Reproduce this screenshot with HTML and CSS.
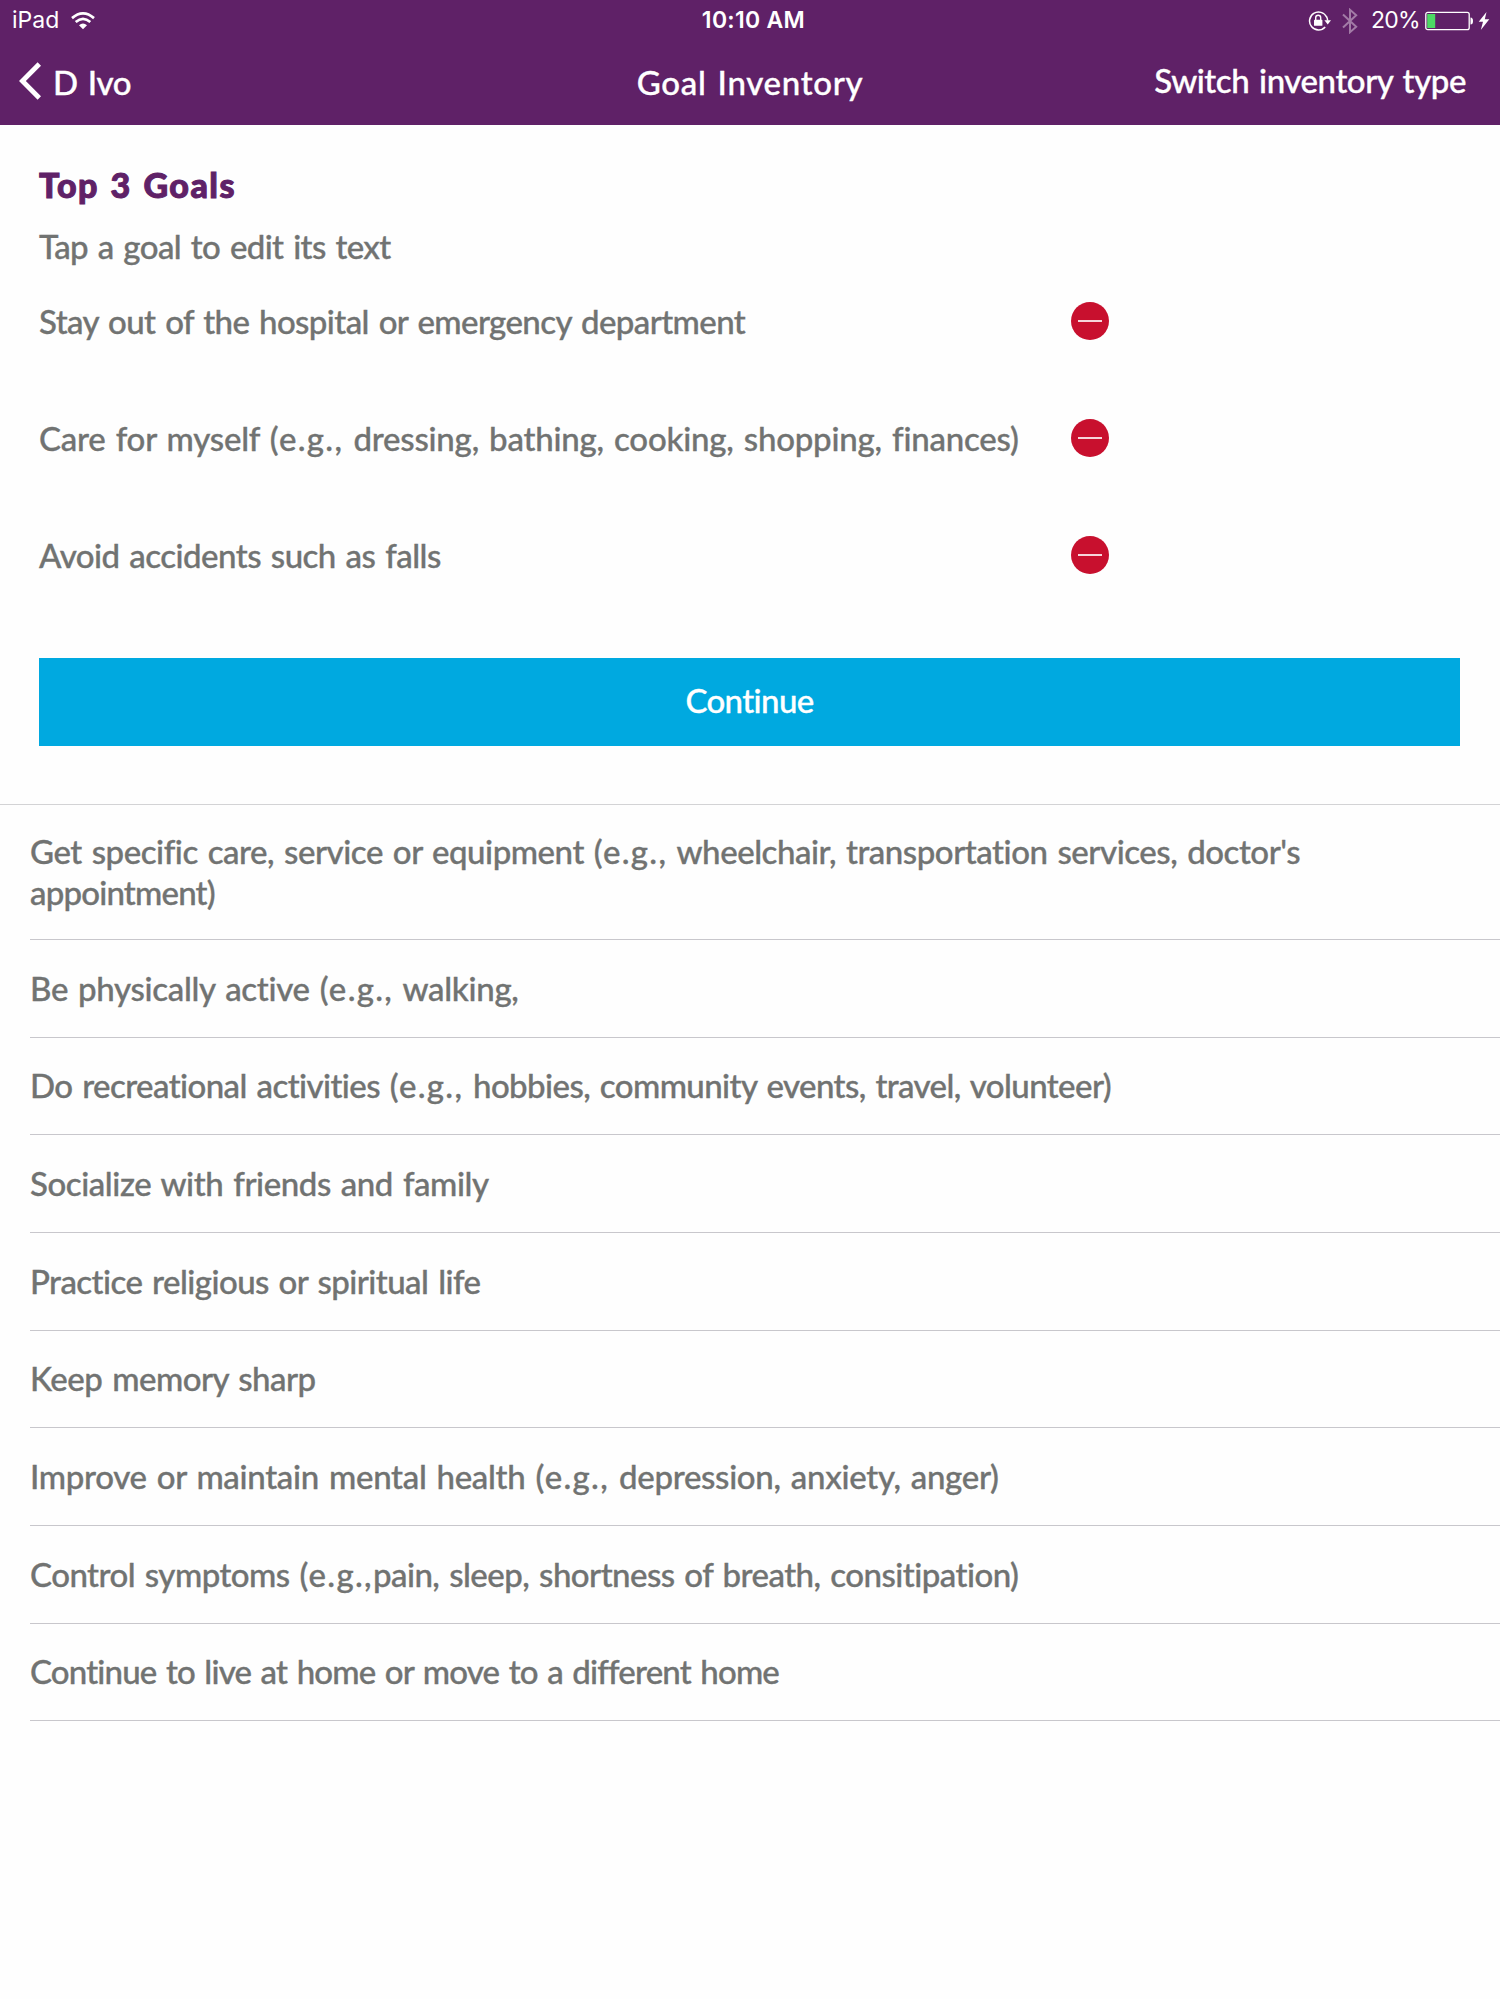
FILE: index.html
```html
<!DOCTYPE html>
<html lang="en">
<head>
<meta charset="utf-8">
<title>Goal Inventory</title>
<link rel="stylesheet" href="styles.css">
</head>
<body>
<header class="header">
  <div class="status">
    <div class="status-left">
      <span class="device">iPad</span>
      <svg class="wifi" width="24" height="18" viewBox="0 0 24 18" fill="none" stroke="#fff"><path d="M1 6.1Q12-3.3 23 6.1" stroke-width="2.7"/><path d="M4.7 10Q12 3.7 19.3 10" stroke-width="2.6"/><path d="M12 17.3L8 13.2Q12 9.7 16 13.2Z" fill="#fff" stroke="none"/></svg>
    </div>
    <span class="clock">10:10 AM</span>
    <div class="status-right">
      <svg class="lock" width="23" height="20" viewBox="0 0 23 20" fill="none" stroke="#fff"><path d="M18.7 6.2A9 9 0 1 0 17.2 16.1" stroke-width="1.5"/><path d="M16.4 9.2h6.6l-3.3 4.2z" fill="#fff" stroke="none"/><path d="M18.5 5.6q1 1.6 1.1 4" stroke-width="1.5"/><rect x="6" y="8.8" width="8.4" height="6" rx=".6" fill="#fff" stroke="none"/><path d="M7.7 9V6.8a2.5 2.5 0 0 1 5 0V9" stroke-width="1.4"/></svg>
      <svg class="bluetooth" width="16" height="26" viewBox="0 0 16 26" fill="none" stroke="#a27ba6" stroke-width="2"><path d="M1 6.5L14.2 18.8 8 24.2V1.8L14.2 7.2 1 19.5"/></svg>
      <span class="percent">20%</span>
      <svg class="battery" width="49" height="20" viewBox="0 0 49 20"><rect x=".8" y="1.3" width="43.4" height="17.4" rx="2" fill="none" stroke="#fff" stroke-width="1.3"/><rect x="2.2" y="3" width="8" height="14" fill="#4cd964"/><path d="M45.5 6.5q2.5 0 2.5 3.5t-2.5 3.5z" fill="#fff"/></svg>
      <svg class="bolt" width="12" height="18" viewBox="0 0 12 18" fill="#fff"><path d="M8.5 0L.7 9.7H5L2.8 18 11.3 7.3H6.8z"/></svg>
    </div>
  </div>
  <nav class="nav">
    <a class="back"><svg width="22" height="38" viewBox="0 0 22 38" fill="none" stroke="#fff" stroke-width="4.8"><path d="M20.3 2L3.4 19 20.3 36"/></svg><span class="t-back">D Ivo</span></a>
    <h1 class="title"><span class="t-title">Goal Inventory</span></h1>
    <a class="switch"><span class="t-switch">Switch inventory type</span></a>
  </nav>
</header>
<main>
  <section class="top">
    <h2 class="heading"><span class="t-heading">Top 3 Goals</span></h2>
    <p class="hint"><span class="t-hint">Tap a goal to edit its text</span></p>
    <ul class="goals">
      <li class="goal"><span class="t-stay">Stay out of the hospital or emergency department</span><i class="remove"></i></li>
      <li class="goal"><span class="t-care">Care for myself <span class="eg">(e.g.,</span> dressing, bathing, cooking, shopping, finances)</span><i class="remove"></i></li>
      <li class="goal"><span class="t-avoid">Avoid accidents such as falls</span><i class="remove"></i></li>
    </ul>
    <button class="continue"><span class="t-continue">Continue</span></button>
  </section>
  <ul class="list">
    <li class="row row-tall"><span class="t-get">Get specific care, service or equipment <span class="eg">(e.g.,</span> wheelchair, transportation services, doctor's<br><span class="t-appt">appointment)</span></span></li>
    <li class="row"><span class="t-be">Be physically active <span class="eg">(e.g.,</span> walking,</span></li>
    <li class="row"><span class="t-do">Do recreational activities <span class="eg">(e.g.,</span> hobbies, community events, travel, volunteer)</span></li>
    <li class="row"><span class="t-social">Socialize with friends and family</span></li>
    <li class="row"><span class="t-practice">Practice religious or spiritual life</span></li>
    <li class="row"><span class="t-keep">Keep memory sharp</span></li>
    <li class="row"><span class="t-improve">Improve or maintain mental health <span class="eg">(e.g.,</span> depression, anxiety, anger)</span></li>
    <li class="row"><span class="t-control">Control symptoms <span class="eg">(e.g.,</span>pain, sleep, shortness of breath, consitipation)</span></li>
    <li class="row"><span class="t-home">Continue to live at home or move to a different home</span></li>
  </ul>
</main>
</body>
</html>
```
FILE: styles.css
```css
* { box-sizing: border-box; }
body {
  margin: 0;
  min-height: 1999px;
  background: #fefefe;
  color: #717372;
  font: 500 33px/41px Lato, sans-serif;
  word-spacing: 2px;
  -webkit-text-stroke: .35px;
}
h1, h2, p, ul { margin: 0; padding: 0; font: inherit; }
ul { list-style: none; }
span { white-space: nowrap; }

.header { height: 125px; background: #5f2167; color: #fff; }
.status {
  display: grid;
  grid-template-columns: 1fr auto 1fr;
  height: 41px;
  padding: 0 10px 0 12px;
  align-items: center;
  font: 400 23px/41px Inter, sans-serif;
  word-spacing: 0;
  -webkit-text-stroke: 0;
}
.status-left, .status-right { display: flex; align-items: center; }
.status-left { gap: 12px; }
.status-right { justify-content: flex-end; }
.clock { font-weight: 600; letter-spacing: .3px; margin-left: 5px; }
.lock { margin-right: 11px; }
.bluetooth { margin-right: 13px; }
.percent { margin-right: 5px; letter-spacing: -.7px; }
.battery { margin-right: 4px; }

.nav {
  display: grid;
  grid-template-columns: 1fr auto 1fr;
  height: 84px;
  padding: 21px 34px 0 19px;
}
.back { display: flex; gap: 12px; }
.title { margin-left: 15px; }
.switch { margin-top: -2px; text-align: right; }

.top { height: 679px; padding: 39px 39px 0; }
.heading { color: #5f2167; font-weight: 900; font-size: 34px; -webkit-text-stroke: 1px; }
.hint { margin-top: 21px; }
.goals { margin-top: 34px; }
.goal { display: flex; justify-content: space-between; width: 1070px; height: 117.2px; }
.remove {
  width: 38px;
  height: 38px;
  margin-top: 1px;
  border-radius: 50%;
  background: linear-gradient(#f6d5da, #f6d5da) center / 24px 2px no-repeat #c8102e;
}
.continue {
  display: block;
  width: 1421px;
  height: 88px;
  margin-top: 5.4px;
  padding: 0 0 2px;
  border: 0;
  background: #00a9e0;
  color: #fff;
  font: inherit;
  word-spacing: inherit;
}

.list { border-top: 1px solid #d3d3d5; }
.row {
  display: flex;
  align-items: center;
  height: 97.66px;
  margin-left: 30px;
  border-bottom: 1px solid #c8c7cc;
}
.row-tall { height: 135px; }

/* Per-label tracking */
.t-back { letter-spacing: -.3px; }
.t-title { letter-spacing: .7px; }
.t-switch { letter-spacing: -.43px; }
.t-heading { letter-spacing: 1.5px; word-spacing: 2px; }
.t-hint { letter-spacing: -.61px; }
.t-stay { letter-spacing: -.58px; }
.t-care { letter-spacing: -.21px; }
.t-avoid { letter-spacing: -.52px; }
.t-continue { letter-spacing: -.6px; }
.t-get { letter-spacing: -.45px; }
.t-appt { letter-spacing: -.8px; }
.t-be { letter-spacing: -.31px; }
.t-do { letter-spacing: -.58px; }
.t-social { letter-spacing: -.42px; }
.t-practice { letter-spacing: -.55px; }
.t-keep { letter-spacing: -.5px; }
.t-improve { letter-spacing: -.3px; }
.t-control { letter-spacing: -.53px; }
.t-home { letter-spacing: -.83px; }
.eg { letter-spacing: 1.3px; }
```
